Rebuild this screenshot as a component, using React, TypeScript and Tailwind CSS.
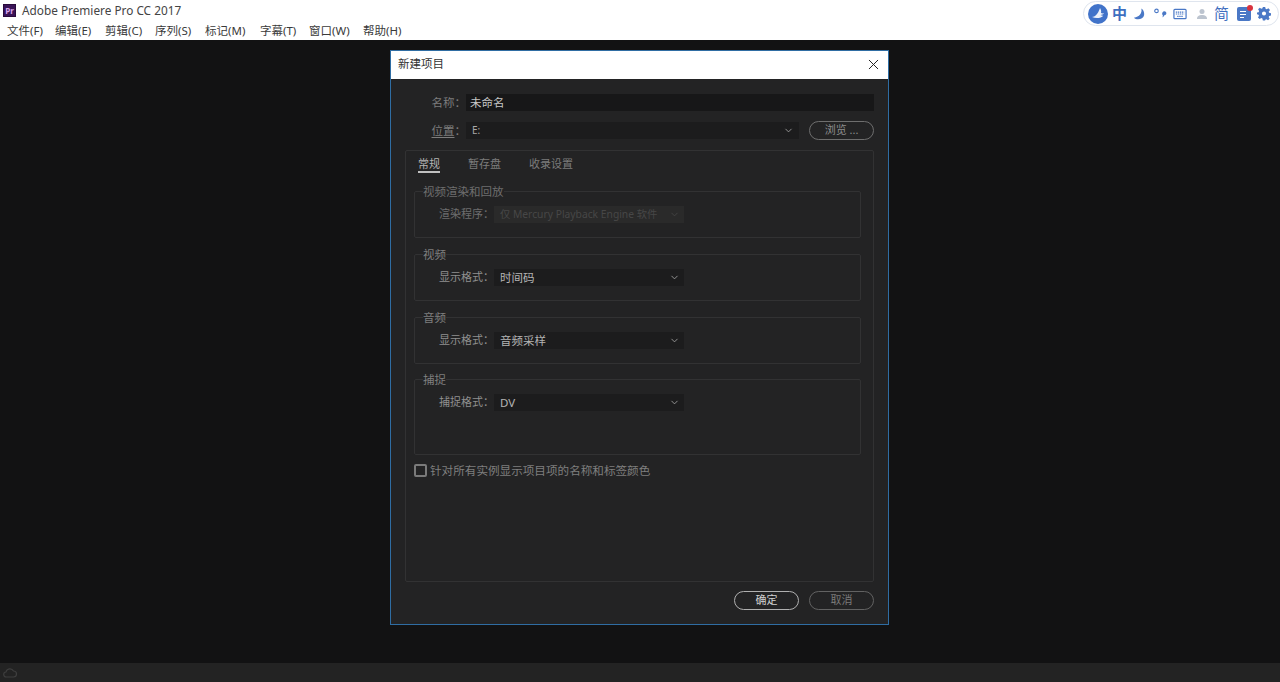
import { ChevronDown, X } from "lucide-react"

const cjk = "font-['Noto_Sans','Noto_Sans_CJK_SC',sans-serif]"

const menus = [
  { label: "文件(F)", w: "w-[48px]" },
  { label: "编辑(E)", w: "w-[50px]" },
  { label: "剪辑(C)", w: "w-[50px]" },
  { label: "序列(S)", w: "w-[50px]" },
  { label: "标记(M)", w: "w-[55px]" },
  { label: "字幕(T)", w: "w-[49px]" },
  { label: "窗口(W)", w: "w-[54px]" },
  { label: "帮助(H)", w: "w-[50px]" },
]

function ImeBar() {
  return (
    <div className="absolute top-[1px] right-[1px] flex h-[25px] w-[196px] items-center rounded-full border border-[#dfe5ee] bg-white pl-[4px] text-[#3f6fc0]">
      <svg width="20" height="20" viewBox="0 0 20 20" className="shrink-0">
        <circle cx="10" cy="10" r="10" fill="#4173c9" />
        <path d="M4 13c3 0 6-3 8-9 1 2 1.500 3 1 5 1 .5 2 .5 3 .3-.8 1.200-2 1.700-3.500 1.700 .8.600 1.800.800 2.800.7-2 2.300-7 3.300-11.300 1.300z" fill="#fff" opacity=".9" />
      </svg>
      <span className="ml-[4px] w-[15px] shrink-0 text-[15px] leading-none font-bold">中</span>
      <svg width="13" height="14" viewBox="0 0 14 14" className="ml-[6px] shrink-0">
        <path d="M9 1c1 5-2 9-8 10 3 3 10 2 11-3 .4-3-1-6-3-7z" fill="#4a78c6" />
      </svg>
      <svg width="14" height="13" viewBox="0 0 16 14" className="ml-[7px] shrink-0">
        <circle cx="4" cy="4" r="2" fill="none" stroke="#4a78c6" strokeWidth="1.300" />
        <path d="M11 5.500a2.300 2.300 0 1 1 2 3.500c-.5 1.500-1.500 2-2.500 2.500.7-1 .8-1.500.7-2.500-1-1-1-2.500-.2-3.500z" fill="#4a78c6" />
      </svg>
      <svg width="14" height="12" viewBox="0 0 15 12" className="ml-[6px] shrink-0">
        <rect x="1" y="1" width="13" height="10" rx="1" fill="none" stroke="#4a78c6" strokeWidth="1.300" />
        <path d="M3 4h9M3 6h9M4.500 8.500h6" stroke="#4a78c6" strokeWidth="1.200" strokeDasharray="1.500 .7" />
      </svg>
      <svg width="12" height="12" viewBox="0 0 12 12" className="ml-[9px] shrink-0">
        <circle cx="6" cy="3.500" r="2.500" fill="#bcc4cf" />
        <path d="M1 11c0-3 2-4 5-4s5 1 5 4z" fill="#bcc4cf" />
      </svg>
      <span className="ml-[6px] w-[15px] shrink-0 text-[15px] leading-none">简</span>
      <span className="relative ml-[8px] h-[14px] w-[14px] shrink-0 rounded-[2px] bg-[#4a78c6]">
        <span className="absolute top-[4px] left-[3px] h-[1px] w-[6px] bg-white" />
        <span className="absolute top-[7px] left-[3px] h-[1px] w-[6px] bg-white" />
        <span className="absolute top-[10px] left-[3px] h-[1px] w-[4px] bg-white" />
        <span className="absolute -top-[2px] -right-[2px] h-[6px] w-[6px] rounded-full bg-[#d9333f]" />
      </span>
      <svg width="14" height="14" viewBox="0 0 24 24" className="ml-[6px] shrink-0">
        <path d="M12 8.500a3.500 3.500 0 1 0 0 7 3.500 3.500 0 0 0 0-7zM10 1h4l.7 3.200 2 .8 2.800-1.700 2.800 2.800L20 9l.8 2 3.200.7v4l-3.200.7-.8 1.800 1.700 2.800-2.800 2.800-2.800-1.700-2 .8L14 24h-4l-.7-3.200-2-.8-2.800 1.700L1.700 18.900 3.400 16l-.8-1.800L0 13.500v-3l2.800-.7.800-2L1.900 5l2.800-2.800 2.800 1.700 2-.8z" fill="#4a78c6" fillRule="evenodd" transform="translate(0 -1)" />
      </svg>
    </div>
  )
}

function Select({ text, dim }: { text: string; dim?: boolean }) {
  return (
    <div className={`flex h-[17px] w-[190px] items-center justify-between pr-[4px] pl-[6px] ${dim ? "bg-[#2a2a2a] text-[10.300px] text-[#474747]" : "bg-[#1c1c1d] text-[11.500px] text-[#b4b4b4]"}`}>
      <span className="whitespace-nowrap">{text}</span>
      <ChevronDown size={11} strokeWidth={1.800} className={dim ? "text-[#474747]" : "text-[#a8a8a8]"} />
    </div>
  )
}

function Group({ title, label, value, dim, h, mb }: { title: string; label: string; value: string; dim?: boolean; h: string; mb: string }) {
  return (
    <fieldset className={`${h} ${mb} rounded-[2px] border border-[#323233] pl-[8px]`}>
      <legend className={`px-0 pt-[2px] text-[11.500px] leading-[14px] ${dim ? "text-[#6e6e6e]" : "text-[#7f7f7f]"}`}>{title}</legend>
      <div className="mt-[7px] flex items-center">
        <span className={`w-[71px] text-right text-[11px] whitespace-nowrap ${dim ? "text-[#6e6e6e]" : "text-[#8f8f8f]"}`}>{label}</span>
        <Select text={value} dim={dim} />
      </div>
    </fieldset>
  )
}

function PillButton({ text, color }: { text: string; color: string }) {
  return (
    <button className={`flex h-[19px] w-[65px] items-center justify-center rounded-full border text-[11px] ${color}`}>
      {text}
    </button>
  )
}

export default function App() {
  return (
    <div className={`relative flex h-[682px] w-[1280px] flex-col overflow-hidden bg-[#121213] ${cjk}`}>
      {/* Window title and menu */}
      <header className="h-[40px] shrink-0 bg-white text-[#333]">
        <div className="flex h-[21px] items-center pl-[3px]">
          <div className="flex h-[13px] w-[13px] items-center justify-center border border-[#2a0a3c] bg-[#3a1457] text-[8px] leading-none font-bold text-[#d9a8f0]">Pr</div>
          <span className="ml-[6px] text-[11.800px] text-[#444]">Adobe Premiere Pro CC 2017</span>
        </div>
        <nav className="flex h-[19px] items-center pl-[7px] text-[11.500px] text-[#3a3a3a]">
          {menus.map((m) => (
            <span key={m.label} className={`${m.w} whitespace-nowrap`}>{m.label}</span>
          ))}
        </nav>
      </header>
      <ImeBar />

      {/* Workspace */}
      <main className="flex-1 pt-[10px] pl-[390px]">
        <div className="flex h-[575px] w-[499px] flex-col border border-[#2f6da3] bg-[#232324]">
          <div className="flex h-[28px] shrink-0 items-center justify-between bg-white pr-[6px] pb-[2px] pl-[7px] text-[11.500px] text-[#333]">
            <span>新建项目</span>
            <X size={17} strokeWidth={1.400} className="text-[#222]" />
          </div>

          <div className="flex flex-1 flex-col pt-[15px] pr-[14px] pl-[14px]">
            <div className="flex h-[17px] items-center">
              <span className="w-[61px] text-right text-[11.500px] whitespace-nowrap text-[#7d7d7d]">名称：</span>
              <div className="flex h-[17px] flex-1 items-center bg-[#171718] pl-[4px] text-[11.500px] text-[#c6c6c6]">未命名</div>
            </div>
            <div className="mt-[10px] flex h-[19px] items-center">
              <span className="w-[61px] text-right text-[11.500px] whitespace-nowrap text-[#7d7d7d]">
                <span className="underline underline-offset-2">位置</span>：
              </span>
              <div className="flex h-[17px] w-[333px] items-center justify-between bg-[#1c1c1d] pr-[5px] pl-[6px] text-[10px] text-[#a8a8a8]">
                <span>E:</span>
                <ChevronDown size={11} strokeWidth={1.800} className="text-[#a8a8a8]" />
              </div>
              <div className="ml-[10px]">
                <PillButton text="浏览 ..." color="border-[#6e6e6e] text-[#8c8c8c]" />
              </div>
            </div>

            {/* Settings panel */}
            <section className="mt-[10px] flex h-[432px] flex-col rounded-[2px] border border-[#323233] pr-[12px] pl-[8px]">
              <div className="flex h-[22px] items-end gap-[28px] pl-[4px] text-[11px] leading-[15px] text-[#7c7c7c]">
                <span className="border-b-2 border-[#c0c0c0] text-[#b5b5b5]">常规</span>
                <span className="pb-[2px]">暂存盘</span>
                <span className="pb-[2px]">收录设置</span>
              </div>
              <div className="mt-[10px] flex flex-col">
                <Group title="视频渲染和回放" label="渲染程序：" value="仅 Mercury Playback Engine 软件" dim h="h-[55px]" mb="mb-[8px]" />
                <Group title="视频" label="显示格式：" value="时间码" h="h-[55px]" mb="mb-[8px]" />
                <Group title="音频" label="显示格式：" value="音频采样" h="h-[55px]" mb="mb-[7px]" />
                <Group title="捕捉" label="捕捉格式：" value="DV" h="h-[84px]" mb="mb-[0px]" />
              </div>
              <label className="mt-[7px] flex items-center text-[11.600px] text-[#7f7f7f]">
                <span className="h-[13px] w-[13px] rounded-[2px] border-2 border-[#7a7a7a]" />
                <span className="ml-[3px]">针对所有实例显示项目项的名称和标签颜色</span>
              </label>
            </section>

            <div className="mt-[9px] flex justify-end gap-[10px]">
              <PillButton text="确定" color="border-[#b0b0b0] text-[#d0d0d0]" />
              <PillButton text="取消" color="border-[#626262] text-[#7a7a7a]" />
            </div>
          </div>
        </div>
      </main>

      {/* Status bar */}
      <footer className="flex h-[19px] shrink-0 items-center bg-[#232323] pl-[3px]">
        <svg width="14" height="11" viewBox="0 0 14 11">
          <path d="M3.500 10a2.500 2.500 0 0 1-.5-5 4 4 0 0 1 7.500-1 3 3 0 0 1 0 6z" fill="none" stroke="#3e3e3e" strokeWidth="1.200" />
        </svg>
      </footer>
    </div>
  )
}
